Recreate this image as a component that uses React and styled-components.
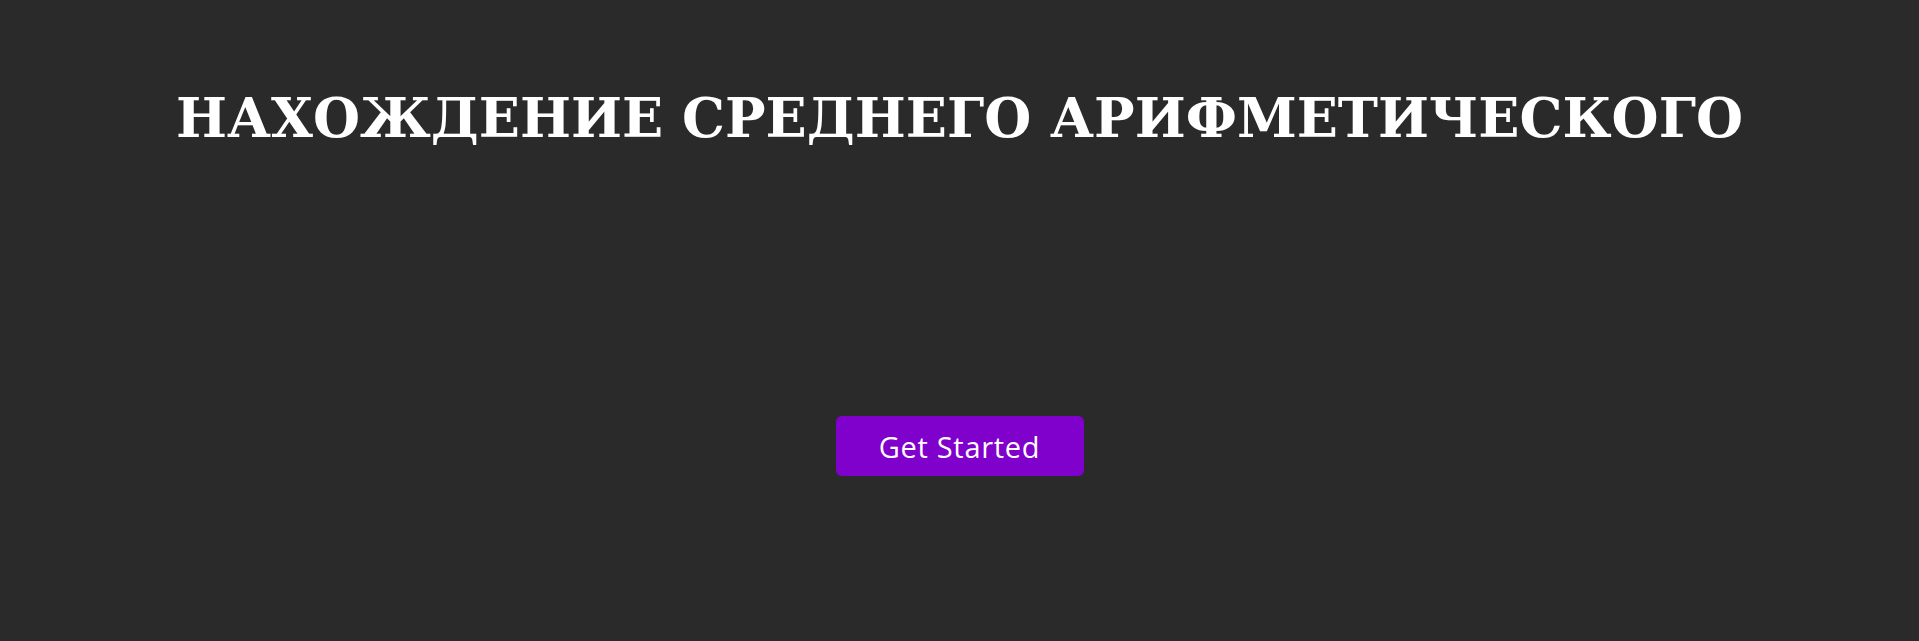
import React from "react";
import styled, { createGlobalStyle } from "styled-components";

const Global = createGlobalStyle`
  html, body { margin: 0; padding: 0; background: #2a2a2a; }
  body { min-height: 641px; }
`;

const Page = styled.main`
  width: 100%;
  height: 641px;
  background: #2a2a2a;
  display: flex;
  flex-direction: column;
  align-items: center;
  box-sizing: border-box;
  padding-top: 83px;
`;

const Title = styled.h1`
  margin: 0;
  font-family: "DejaVu Serif", serif;
  font-weight: bold;
  font-size: 54px;
  line-height: 70px;
  color: #ffffff;
  text-align: center;
`;

const Button = styled.button`
  margin-top: 263px;
  width: 248px;
  height: 60px;
  border: none;
  border-radius: 6px;
  background: #8000cc;
  color: #ffffff;
  font-family: "Open Sans", sans-serif;
  font-size: 29px;
  letter-spacing: 0.7px;
  padding: 0;
  cursor: pointer;
`;

export default function App() {
  return (
    <>
      <Global />
      <Page>
        <Title>НАХОЖДЕНИЕ СРЕДНЕГО АРИФМЕТИЧЕСКОГО</Title>
        <Button>Get Started</Button>
      </Page>
    </>
  );
}
